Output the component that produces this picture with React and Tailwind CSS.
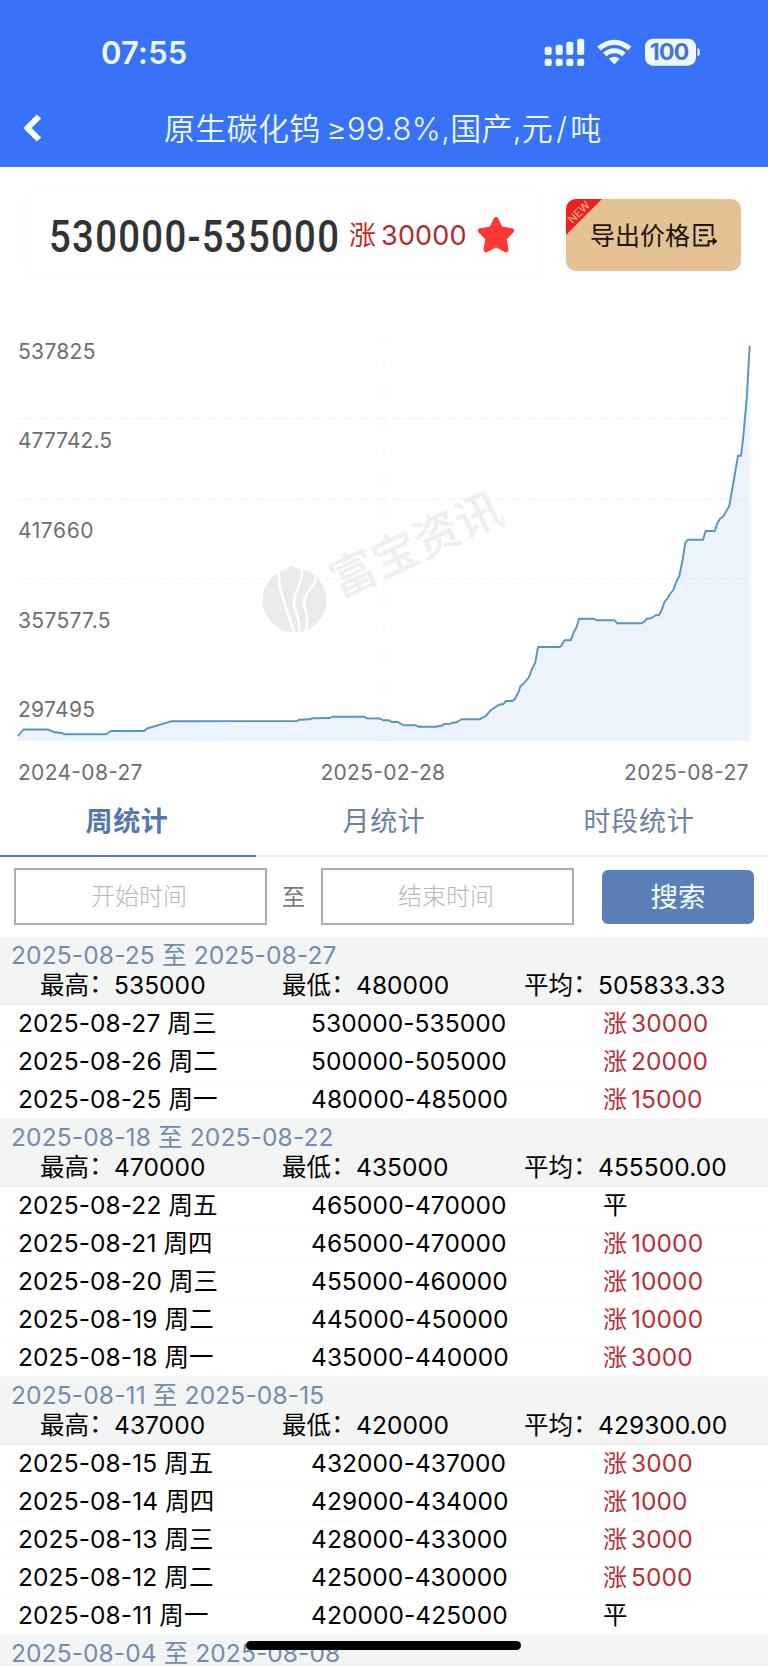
const weeks = [
  {
    range: '2025-08-25 至 2025-08-27',
    high: '535000',
    low: '480000',
    avg: '505833.33',
    rows: [
      ['2025-08-27 周三', '530000-535000', '30000'],
      ['2025-08-26 周二', '500000-505000', '20000'],
      ['2025-08-25 周一', '480000-485000', '15000'],
    ],
  },
  {
    range: '2025-08-18 至 2025-08-22',
    high: '470000',
    low: '435000',
    avg: '455500.00',
    rows: [
      ['2025-08-22 周五', '465000-470000', null],
      ['2025-08-21 周四', '465000-470000', '10000'],
      ['2025-08-20 周三', '455000-460000', '10000'],
      ['2025-08-19 周二', '445000-450000', '10000'],
      ['2025-08-18 周一', '435000-440000', '3000'],
    ],
  },
  {
    range: '2025-08-11 至 2025-08-15',
    high: '437000',
    low: '420000',
    avg: '429300.00',
    rows: [
      ['2025-08-15 周五', '432000-437000', '3000'],
      ['2025-08-14 周四', '429000-434000', '1000'],
      ['2025-08-13 周三', '428000-433000', '3000'],
      ['2025-08-12 周二', '425000-430000', '5000'],
      ['2025-08-11 周一', '420000-425000', null],
    ],
  },
];

const line =
  '18,736 23.5,729.5 47.5,729.5 55,732.3 61.5,733 65,734.3 106,734.3 111,731 144,731 147,728.5 171,721.3 297,721 299,719.7 310,719.3 312,718.3 330,718 332.7,716.7 364,716.7 367,718.3 380,718.5 383.5,720.3 389,720.3 391.5,722 398,722 403.5,725.3 415.7,725.3 418.5,726.7 435.7,726.7 442.5,725.5 444,724 450.5,723.7 452.5,722.7 456.5,722.3 461.7,719.3 479.7,719.3 485.7,716 491.3,709.7 499,704.7 503.3,704 506,701 512.5,701 514.7,699 518,693.3 520.7,685.7 523.3,684 528.7,677.7 532.3,668.3 535.3,662.7 538,647 559.7,647 562,645 564.3,640.3 570.7,640.3 574,631.7 576.7,626.7 579,618.7 594,618.7 596.7,620.3 614.7,620.3 617.3,623.3 641.7,623.3 644.7,621.3 646.7,618.7 650.7,618.3 655.7,615.3 659,615 661.7,610 664.7,601.3 667.3,598.7 670,594 673.3,590 676.7,580.7 679.3,576 682.7,559.5 685.3,542.7 688,539.7 703,539.7 705.7,531 714.7,531 717.3,523.3 720,518.7 723.3,516.3 729.3,506 734.7,475 738,455.7 741,455.7 743.3,436.7 746.7,398.3 749.7,345.7';

const yLabels = [
  { text: '537825', y: 358.5, w: 77.5 },
  { text: '477742.5', y: 448, w: 94 },
  { text: '417660', y: 538, w: 75.5 },
  { text: '357577.5', y: 627.5, w: 92.5 },
  { text: '297495', y: 717, w: 77 },
];

const xLabels = [
  { text: '2024-08-27', x: 18 },
  { text: '2025-02-28', x: 320.5 },
  { text: '2025-08-27', x: 624 },
];

function StatusBar() {
  return (
    <div className="flex h-[104px] items-center justify-between pl-[101px] pr-[68px]">
      <span className="text-[31px] font-semibold leading-none tracking-[0.2px]">07:55</span>
      <svg width="156" height="28" viewBox="544 37 156 28" fill="#effaff">
        <rect x="544.7" y="45.8" width="7" height="8.2" rx="2" />
        <rect x="555.7" y="43.8" width="7" height="10.2" rx="2" />
        <rect x="566.3" y="40.8" width="7" height="13.2" rx="2" />
        <rect x="577.2" y="37.8" width="7" height="16.2" rx="2" />
        <rect x="544.7" y="57.7" width="7" height="7.2" rx="2" />
        <rect x="555.7" y="57.7" width="7" height="7.2" rx="2" />
        <rect x="566.3" y="57.7" width="7" height="7.2" rx="2" />
        <rect x="577.2" y="57.7" width="7" height="7.2" rx="2" />
        <path d="M597.2 45.8 A24.5 24.5 0 0 1 631.4 45.8 L627.9 49.5 A19.5 19.5 0 0 0 600.7 49.5 Z" />
        <path d="M603 51.8 A16.2 16.2 0 0 1 625.6 51.8 L622 55.5 A11 11 0 0 0 606.6 55.5 Z" />
        <path d="M609 57.8 A7.8 7.8 0 0 1 619.6 57.8 L614.3 63.6 Z" />
        <rect x="645" y="37.7" width="51" height="27" rx="8" />
        <path d="M697.5 47 C700.8 47.6 700.8 55 697.5 55.6 Z" />
        <text x="649.8" y="59.4" textLength="39.5" fontSize="23" fontWeight="700" fill="#4a73cf">100</text>
      </svg>
    </div>
  );
}

function Header() {
  return (
    <header className="h-[167px] bg-[#3872f9] text-[#effaff]">
      <StatusBar />
      <div className="flex h-[48px] items-center">
        <svg className="ml-[23px]" width="19" height="28" viewBox="0 0 19 28" fill="none" stroke="#f4fdff" strokeWidth="6">
          <path d="M16 2.5 L4.5 14 L16 25.5" />
        </svg>
        <h1 className="ml-[122px] whitespace-nowrap pt-[1px] text-[31px] font-[350] leading-none tracking-[0.3px] [word-spacing:-3px]">
          原生碳化钨 ≥99.8%,国产,元<span className="mx-[3px]">/</span>吨
        </h1>
      </div>
    </header>
  );
}

function PriceBar() {
  return (
    <div className="flex h-[123px] items-start pl-[26px] pt-[26px]">
      <div className="flex h-[82px] w-[514px] items-center rounded-md pl-[23px] shadow-[0_0_10px_rgba(0,0,0,0.035)]">
        <span className="w-[300px] origin-left scale-x-[0.88] whitespace-nowrap pt-[8px] font-[Roboto] text-[43.5px] font-medium leading-none tracking-[1.5px] text-[#333]">
          530000-535000
        </span>
        <span className="w-[32px] pt-[3px] text-[27px] leading-none text-[#c02a2a]">涨</span>
        <span className="w-[96px] pt-[3px] text-[27px] leading-none tracking-[0.2px] text-[#b02c2c]">30000</span>
        <svg className="mt-[2px]" width="38" height="38" viewBox="0 0 38 38" fill="#fd3733" stroke="#fd3733" strokeWidth="5" strokeLinejoin="round">
          <path d="M19 3.5 L23.6 13 L34.7 14.6 L27 22.4 L29 33.8 L19 28.6 L9 33.8 L11 22.4 L3.3 14.6 L14.4 13 Z" />
        </svg>
      </div>
      <button className="relative ml-[26px] mt-[6px] flex h-[72px] w-[175px] items-center overflow-hidden rounded-[10px] bg-[#e4c294] pl-[24px] text-[#1d120c]">
        <span className="absolute left-0 top-0 h-[36px] w-[36px] bg-[#ee2121] [clip-path:polygon(0_0,100%_0,0_100%)]" />
        <span className="absolute left-0 top-[8px] w-[26px] -rotate-[44deg] text-center text-[11px] leading-none text-[#f7c59c]">
          NEW
        </span>
        <span className="pt-[2px] text-[25px] leading-none">导出价格</span>
        <svg className="ml-[3px]" width="26" height="25" viewBox="0 0 26 25" fill="none" stroke="currentColor" strokeWidth="1.9">
          <path d="M19.5 13 V2 H1.5 V22.5 H13" />
          <path d="M6 7.3 H15 M6 12.3 H15 M6 17.3 H9" />
          <path d="M13 22.5 H15.5 V18.2 H23" />
          <path d="M20 14.8 L24 18.2 L20 21.6 Z" fill="currentColor" strokeWidth="0.8" />
        </svg>
      </button>
    </div>
  );
}

function PriceChart() {
  return (
    <svg className="block" width="768" height="498" viewBox="0 290 768 498">
      <g stroke="#f5f5f5" strokeWidth="1.2">
        <path d="M18 418.3 H749 M18 499.3 H749 M18 579 H749" strokeDasharray="14 3" />
        <path d="M384 338 V741" strokeDasharray="8 3" />
      </g>

      {/* watermark */}
      <g transform="translate(2 0)">
        <path d="M286 567 C290 564 292 568 296 568.5 A32 32 0 1 1 286 569 Z" fill="#ebebeb" />
        <path d="M277 571 C276 592 286 612 292 633" fill="none" stroke="#fff" strokeWidth="2.5" />
        <path d="M298 566 C306 582 286 592 294 612 C297 620 298 626 297 634" fill="none" stroke="#fff" strokeWidth="2.5" />
        <path d="M314 571 C317 588 298 592 303 608 C306 616 305 626 303 633" fill="none" stroke="#fff" strokeWidth="2.5" />
      </g>
      <text x="416" y="561" textAnchor="middle" fontSize="46" fontWeight="500" fill="#efefef" transform="rotate(-25 416 545)">
        富宝资讯
      </text>

      <polygon points={`${line} 749.7,741 18,741`} fill="#3f8fe8" fillOpacity="0.1" />
      <polyline points={line} fill="none" stroke="#5b93bb" strokeWidth="1.9" strokeLinejoin="round" />

      <g fontSize="21" fill="#6e6e6e">
        {yLabels.map((l) => (
          <text key={l.text} x="18" y={l.y} textLength={l.w}>{l.text}</text>
        ))}
        {xLabels.map((l) => (
          <text key={l.text} x={l.x} y="779.5" textLength="124.5">{l.text}</text>
        ))}
      </g>
    </svg>
  );
}

function Tabs() {
  return (
    <nav className="grid h-[69px] grid-cols-3 text-center text-[27px] leading-[67px] tracking-[0.7px] text-[#6d82a3]">
      <div className="border-b-2 border-[#5c7cab] pr-[2px] font-bold text-[#5578ac]">周统计</div>
      <div className="border-b-2 border-[#ebebeb]">月统计</div>
      <div className="border-b-2 border-[#ebebeb] pr-[2px]">时段统计</div>
    </nav>
  );
}

function SearchBar() {
  return (
    <div className="flex h-[80px] items-center pb-[1px] pl-[14px]">
      <div className="flex h-[57px] w-[253px] items-center justify-center border-2 border-[#adadad] pr-[3px] pt-[1px] text-[24px] font-light text-[#b8b8b8]">
        开始时间
      </div>
      <span className="w-[54px] pr-[1px] pt-[1px] text-center text-[23px] text-[#7b7b7b]">至</span>
      <div className="flex h-[57px] w-[253px] items-center justify-center border-2 border-[#adadad] pr-[3px] pt-[1px] text-[24px] font-light text-[#b8b8b8]">
        结束时间
      </div>
      <button className="ml-[28px] h-[54px] w-[152px] rounded-md bg-[#5b7fb7] pt-[2px] text-[27.5px] text-[#f0ffff]">搜索</button>
    </div>
  );
}

function Stat({ label, children }) {
  return (
    <>
      <span className="w-[74px]">
        {label}
        <span className="inline-block -translate-y-[2px]">：</span>
      </span>
      <span className="w-[168px]">{children}</span>
    </>
  );
}

function WeekGroup({ week }) {
  return (
    <section className="text-[24.5px] tracking-[0.06px] text-black">
      <div className="h-[68px] border-b-2 border-[#eceded] bg-[#f3f4f4] pt-[3px]">
        <p className="h-[30px] pl-[11px] leading-[30px] tracking-[0.15px] text-[#748cab]">{week.range}</p>
        <div className="flex whitespace-nowrap pl-[40px] leading-[30px]">
          <Stat label="最高">{week.high}</Stat>
          <Stat label="最低">{week.low}</Stat>
          <Stat label="平均">{week.avg}</Stat>
        </div>
      </div>
      {week.rows.map(([date, price, up]) => (
        <div key={date} className="flex h-[38px] border-b border-[#f8f9f9] pl-[18px] leading-[37px]">
          <span className="w-[293px] tracking-[0.1px]">{date}</span>
          <span className="w-[292px]">{price}</span>
          {up ? (
            <span className="flex gap-[4px] text-[#b5303a]">
              <span className="text-[24px]">涨</span>
              {up}
            </span>
          ) : (
            <span>平</span>
          )}
        </div>
      ))}
    </section>
  );
}

export default function App() {
  return (
    <div
      lang="zh-CN"
      className="relative h-[1666px] w-[768px] overflow-hidden bg-white font-['Inter','Noto_Sans_CJK_SC',sans-serif]"
    >
      <Header />
      <PriceBar />
      <PriceChart />
      <Tabs />
      <SearchBar />
      {weeks.map((w) => (
        <WeekGroup key={w.range} week={w} />
      ))}
      <div className="h-[40px] bg-[#f3f4f4] pl-[11px] pt-[3px] text-[24.5px] leading-[30px] tracking-[0.1px] text-[#748cab]">
        2025-08-04 至 2025-08-08
      </div>
      {/* home indicator */}
      <div className="absolute bottom-[16px] left-[246px] h-[9px] w-[275px] rounded-full bg-black" />
    </div>
  );
}
